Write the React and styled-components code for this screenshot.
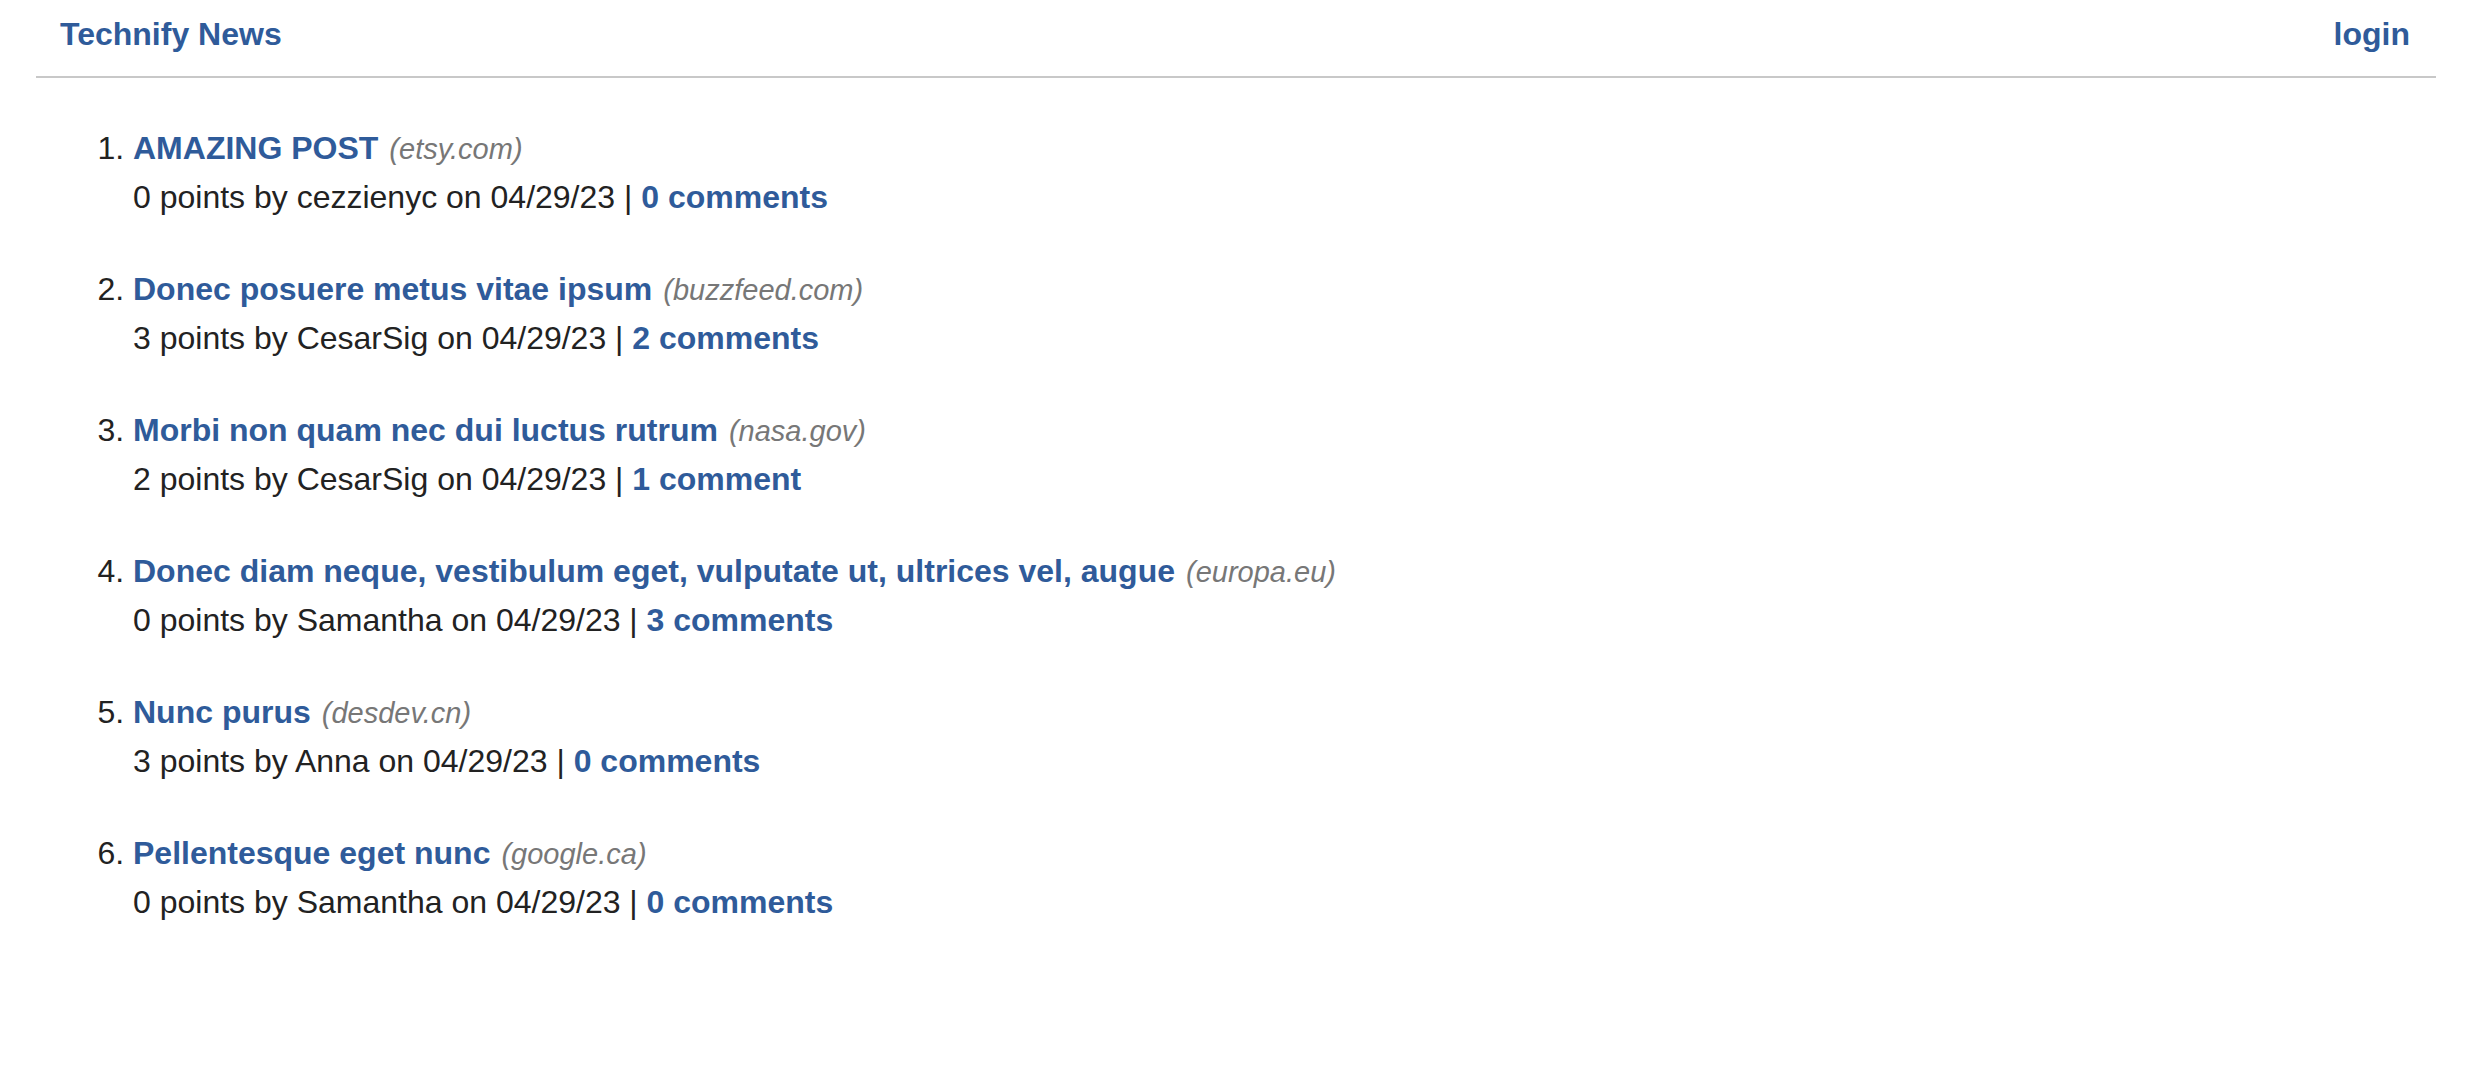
import React from 'react'
import styled, { createGlobalStyle } from 'styled-components'

const GlobalStyle = createGlobalStyle`
  body {
    margin: 0;
    background: #fff;
    font-family: "Liberation Sans", Arial, Helvetica, sans-serif;
    color: #222;
  }
`

const Page = styled.div`
  margin: 0 46px 0 36px;
`

const Header = styled.header`
  display: flex;
  justify-content: space-between;
  align-items: center;
  padding: 10px 26px 18px 24px;
  border-bottom: 2px solid #c8c8c8;
  line-height: 48px;
  font-size: 32px;
  font-weight: bold;
`

const NavLink = styled.a`
  color: #2f5b9a;
  text-decoration: none;
`

const List = styled.ol`
  margin: 46px 0 0 0;
  padding-left: 97px;
  font-size: 32px;
  line-height: 48px;
`

const Item = styled.li`
  margin-bottom: 44px;
`

const Title = styled.a`
  color: #2f5b9a;
  font-weight: bold;
  text-decoration: none;
`

const Domain = styled.span`
  color: #777;
  font-style: italic;
  font-size: 29px;
  margin-left: 11px;
`

const Meta = styled.div`
  color: #222;
`

const posts = [
  { title: 'AMAZING POST', domain: 'etsy.com', points: 0, user: 'cezzienyc', comments: '0 comments' },
  { title: 'Donec posuere metus vitae ipsum', domain: 'buzzfeed.com', points: 3, user: 'CesarSig', comments: '2 comments' },
  { title: 'Morbi non quam nec dui luctus rutrum', domain: 'nasa.gov', points: 2, user: 'CesarSig', comments: '1 comment' },
  { title: 'Donec diam neque, vestibulum eget, vulputate ut, ultrices vel, augue', domain: 'europa.eu', points: 0, user: 'Samantha', comments: '3 comments' },
  { title: 'Nunc purus', domain: 'desdev.cn', points: 3, user: 'Anna', comments: '0 comments' },
  { title: 'Pellentesque eget nunc', domain: 'google.ca', points: 0, user: 'Samantha', comments: '0 comments' },
]

const App = () => {
  return (
    <Page>
      <GlobalStyle />
      <Header>
        <NavLink href="#">Technify News</NavLink>
        <NavLink href="#">login</NavLink>
      </Header>
      <List>
        {posts.map((p, i) => (
          <Item key={i}>
            <Title href="#">{p.title}</Title>
            <Domain>({p.domain})</Domain>
            <Meta>
              {p.points} points by {p.user} on 04/29/23 | <Title href="#">{p.comments}</Title>
            </Meta>
          </Item>
        ))}
      </List>
    </Page>
  )
}

export default App
